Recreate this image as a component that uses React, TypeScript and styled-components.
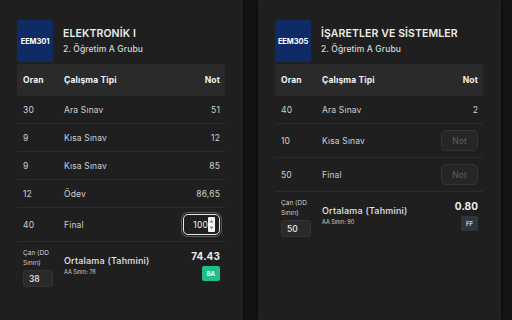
import React from "react";
import styled, { createGlobalStyle } from "styled-components";

const Global = createGlobalStyle`
  html, body { margin: 0; padding: 0; background: #141414; }
  body { font-family: "Inter", "Noto Sans", sans-serif; color: #d2d2d2; overflow: hidden; }
  * { box-sizing: border-box; }
`;

const Page = styled.div`
  display: flex;
  gap: 15px;
  width: 512px;
  height: 320px;
  background: #141414;
`;

const Card = styled.div`
  width: 243px;
  flex: none;
  height: 320px;
  background: #1f1f1f;
  padding: 20px 18px 0 17px;
  box-shadow: 0 0 6px rgba(0, 0, 0, 0.6);
`;

const Head = styled.div`
  display: flex;
  align-items: flex-start;
  gap: 10px;
  height: 44px;
`;

const Logo = styled.div`
  width: 36px;
  height: 42px;
  border-radius: 3px;
  background: #0f2b66;
  color: #fff;
  font-size: 7.5px;
  font-weight: 700;
  display: flex;
  align-items: center;
  justify-content: center;
  letter-spacing: -0.1px;
`;

const Titles = styled.div`
  display: flex;
  flex-direction: column;
  padding-top: 7px;
`;

const Title = styled.div`
  font-size: 10.5px;
  font-weight: 600;
  color: #ececec;
  line-height: 14px;
  letter-spacing: 0.1px;
`;

const Sub = styled.div`
  font-size: 8.5px;
  font-weight: 500;
  color: #d6d6d6;
  line-height: 14px;
  margin-top: 1px;
  letter-spacing: 0.1px;
`;

const Row = styled.div<{ $head?: boolean; $tall?: boolean }>`
  display: grid;
  grid-template-columns: 41px 1fr auto;
  align-items: center;
  padding: 0 5px 0 6px;
  height: ${(p) => (p.$head ? 32 : p.$tall ? 34 : 28)}px;
  background: ${(p) => (p.$head ? "#2a2a2a" : "transparent")};
  border-bottom: ${(p) => (p.$head ? "none" : "1px solid #2c2c2c")};
  font-size: 8.5px;
  letter-spacing: 0.15px;
  font-weight: ${(p) => (p.$head ? 700 : 400)};
  color: ${(p) => (p.$head ? "#f2f2f2" : "#cfcfcf")};
`;

const Right = styled.div`
  text-align: right;
  display: flex;
  justify-content: flex-end;
`;

const NumBox = styled.div<{ $active?: boolean }>`
  width: 37px;
  height: 21px;
  border-radius: 5px;
  border: ${(p) => (p.$active ? "1.5px solid #e6e6e6" : "1px solid #353535")};
  background: ${(p) => (p.$active ? "#1f1f1f" : "#262626")};
  box-shadow: ${(p) => (p.$active ? "0 0 0 1px #1f1f1f, 0 0 0 2px #5a5a5a" : "none")};
  display: flex;
  align-items: center;
  justify-content: ${(p) => (p.$active ? "flex-end" : "center")};
  padding: ${(p) => (p.$active ? "0 4px 0 0" : "0")};
  font-size: 8.5px;
  color: ${(p) => (p.$active ? "#f0f0f0" : "#5f5f5f")};
`;

const Spin = styled.div`
  width: 7px;
  height: 15px;
  background: #f4f4f4;
  border-radius: 1px;
  display: flex;
  flex-direction: column;
  align-items: center;
  justify-content: space-around;
`;

const Footer = styled.div`
  display: grid;
  grid-template-columns: 41px 1fr auto;
  padding: 6px 5px 0 6px;
  align-items: start;
`;

const CanCol = styled.div`
  display: flex;
  flex-direction: column;
`;

const CanLabel = styled.div`
  font-size: 6.5px;
  line-height: 10px;
  width: 32px;
  color: #cfcfcf;
`;

const CanInput = styled.div`
  margin-top: 2px;
  width: 30px;
  height: 17px;
  border-radius: 3px;
  background: #2a2a2a;
  border: 1px solid #333;
  font-size: 8.5px;
  font-weight: 500;
  color: #eee;
  display: flex;
  align-items: center;
  padding-left: 5px;
`;

const Avg = styled.div`
  display: flex;
  flex-direction: column;
  padding-top: 7px;
`;

const AvgTitle = styled.div`
  font-size: 9px;
  font-weight: 500;
  color: #e4e4e4;
  line-height: 12px;
  letter-spacing: 0.2px;
`;

const AvgSub = styled.div`
  font-size: 5.5px;
  color: #cfcfcf;
  margin-top: 2px;
`;

const Score = styled.div`
  display: flex;
  flex-direction: column;
  align-items: flex-end;
  padding-top: 1px;
`;

const ScoreVal = styled.div`
  font-size: 10px;
  font-weight: 700;
  color: #ececec;
  line-height: 14px;
  letter-spacing: 0.1px;
`;

const Badge = styled.div<{ $bg: string; $fg: string }>`
  margin-top: 3px;
  height: 15px;
  padding: 0 5px;
  min-width: 16px;
  border-radius: 2px;
  background: ${(p) => p.$bg};
  color: ${(p) => p.$fg};
  font-size: 6px;
  font-weight: 700;
  display: flex;
  align-items: center;
  justify-content: center;
`;

type Item = { oran: string; tip: string; not?: string; input?: "active" | "empty"; value?: string };

type Course = {
  code: string;
  name: string;
  group: string;
  items: Item[];
  can: string;
  aa: string;
  avg: string;
  letter: string;
  badgeBg: string;
  badgeFg: string;
};

const courses: Course[] = [
  {
    code: "EEM301",
    name: "ELEKTRONİK I",
    group: "2. Öğretim A Grubu",
    items: [
      { oran: "30", tip: "Ara Sınav", not: "51" },
      { oran: "9", tip: "Kısa Sınav", not: "12" },
      { oran: "9", tip: "Kısa Sınav", not: "85" },
      { oran: "12", tip: "Ödev", not: "86,65" },
      { oran: "40", tip: "Final", input: "active", value: "100" },
    ],
    can: "38",
    aa: "78",
    avg: "74.43",
    letter: "BA",
    badgeBg: "#1fbf8a",
    badgeFg: "#e8fff6",
  },
  {
    code: "EEM305",
    name: "İŞARETLER VE SİSTEMLER",
    group: "2. Öğretim A Grubu",
    items: [
      { oran: "40", tip: "Ara Sınav", not: "2" },
      { oran: "10", tip: "Kısa Sınav", input: "empty" },
      { oran: "50", tip: "Final", input: "empty" },
    ],
    can: "50",
    aa: "90",
    avg: "0.80",
    letter: "FF",
    badgeBg: "#2f353e",
    badgeFg: "#c9ced6",
  },
];

const Spinner = () => (
  <Spin>
    <svg width="5" height="4" viewBox="0 0 5 4">
      <path d="M2.5 0.5 L4.5 3.5 L0.5 3.5 Z" fill="#8a8a8a" />
    </svg>
    <svg width="5" height="4" viewBox="0 0 5 4">
      <path d="M0.5 0.5 L4.5 0.5 L2.5 3.5 Z" fill="#8a8a8a" />
    </svg>
  </Spin>
);

const CourseCard = ({ c }: { c: Course }) => (
  <Card>
    <Head>
      <Logo>{c.code}</Logo>
      <Titles>
        <Title>{c.name}</Title>
        <Sub>{c.group}</Sub>
      </Titles>
    </Head>
    <Row $head>
      <div>Oran</div>
      <div>Çalışma Tipi</div>
      <Right>Not</Right>
    </Row>
    {c.items.map((it, i) => (
      <Row key={i} $tall={!!it.input}>
        <div>{it.oran}</div>
        <div>{it.tip}</div>
        <Right>
          {it.input === "active" ? (
            <NumBox $active>
              {it.value}
              <Spinner />
            </NumBox>
          ) : it.input === "empty" ? (
            <NumBox>Not</NumBox>
          ) : (
            it.not
          )}
        </Right>
      </Row>
    ))}
    <Footer>
      <CanCol>
        <CanLabel>Çan (DD Sınırı)</CanLabel>
        <CanInput>{c.can}</CanInput>
      </CanCol>
      <Avg>
        <AvgTitle>Ortalama (Tahmini)</AvgTitle>
        <AvgSub>AA Sınırı: {c.aa}</AvgSub>
      </Avg>
      <Score>
        <ScoreVal>{c.avg}</ScoreVal>
        <Badge $bg={c.badgeBg} $fg={c.badgeFg}>
          {c.letter}
        </Badge>
      </Score>
    </Footer>
  </Card>
);

export default function App() {
  return (
    <>
      <Global />
      <Page>
        {courses.map((c) => (
          <CourseCard key={c.code} c={c} />
        ))}
      </Page>
    </>
  );
}
